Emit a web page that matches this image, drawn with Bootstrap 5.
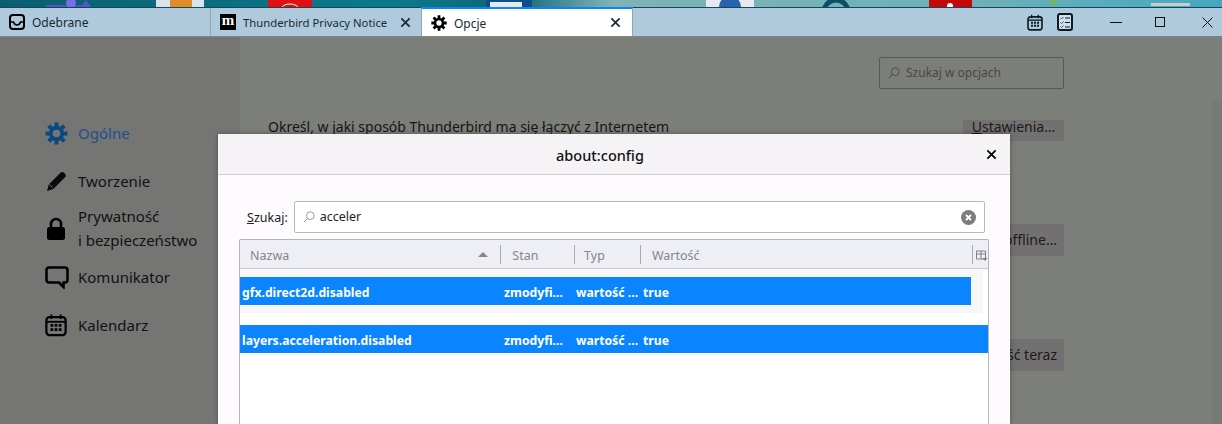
<!DOCTYPE html>
<html lang="pl">
<head>
<meta charset="utf-8">
<title>Opcje</title>
<link href="https://cdn.jsdelivr.net/npm/bootstrap@5.3.0/dist/css/bootstrap.min.css" rel="stylesheet">
<style>
html,body{height:424px;overflow:hidden;}
body{font-family:"Noto Sans","Open Sans",sans-serif;background:#7c7e7a;color:#151515;font-size:14px;position:relative;}
.desk{height:7px;display:block;width:1222px;}
.tabbar{height:29px;background:#aecadc;border-top:1px solid #0f4a5c;color:#1a2a33;font-size:12px;}
.tb-tab{height:28px;padding-left:9px;flex:0 0 auto;}
.t1{width:210px;}
.t2{width:211px;border-left:1px solid #8ea8b8;position:relative;}
.t3{width:212px;background:#fff;border-top:2px solid #0a84ff;border-left:1px solid #8ea8b8;border-right:1px solid #8ea8b8;height:29px;margin-top:-1px;position:relative;z-index:2;}
.tb-label{margin-left:7px;white-space:nowrap;padding-top:2px;}
.t2 .tb-label{width:147px;margin-left:7px;font-size:11.3px;}
.t2 .tb-x{margin-left:10px;}
.t3 .tb-x{margin-left:auto;margin-right:11px;}
.m-ico{width:16px;height:16px;background:#000;color:#fff;font-family:"Liberation Serif",serif;font-weight:700;font-size:15px;line-height:13px;text-align:center;}
.tb-right{margin-left:auto;height:28px;}
.tool-a{margin-right:14px;}
.tool-b{margin-right:37px;}
.win-a{margin-right:33px;}
.win-b{margin-right:37px;}
.win-c{margin-right:9px;}
.tabshade{height:1px;background:#7f8486;}
.shell{height:387px;}
.side{width:240px;flex:0 0 240px;background:#757674;padding:84px 0 0 45px;font-size:15px;}
.side-item{display:flex;align-items:center;color:#111;line-height:24px;}
.side-ico{width:33px;flex:0 0 33px;}
.i1{height:24px;color:#1d4f8c;}
.i1 svg{color:#0b4a7e;}
.i2{height:24px;margin-top:24px;}
.i3{height:48px;margin-top:11px;}
.i4{height:24px;margin-top:13px;}
.i5{height:24px;margin-top:24px;}
.pane{flex:1 1 auto;padding:20px 148px 0 28px;position:relative;}
.finder{width:185px;height:32px;margin-left:auto;border:1px solid #565856;border-radius:2px;color:#464846;font-size:12px;padding-left:8px;margin-bottom:31px;}
.finder span{margin-left:6px;}
.setrow{display:flex;justify-content:space-between;align-items:flex-start;font-size:14px;line-height:13px;}
.setbtn{background:#737072;color:#1a1a1a;padding:0 7px;height:21px;line-height:13px;width:101px;text-align:center;white-space:nowrap;}
.sb2{margin-top:83px;height:32px;line-height:32px;display:flex;justify-content:flex-end;}
.sb3{margin-top:83px;height:32px;line-height:32px;display:flex;justify-content:flex-end;}
.plainbtn{background:#737072;width:101px;text-align:right;padding-right:7px;color:#1a1a1a;}
.scrollcol{width:10px;flex:0 0 10px;margin-top:64px;background:#777976;}
.dlg{position:absolute;left:218px;top:134px;width:792px;height:290px;background:#fdfbfe;border-radius:3px 3px 0 0;box-shadow:0 0 5px rgba(0,0,0,.35);z-index:5;}
.dlg-head{height:41px;background:#f5f3f6;border-bottom:1px solid #d0cfd2;font-size:14.5px;font-weight:500;color:#111;position:relative;padding:3px 28px 0 0;}
.dlg-x{position:absolute;right:13px;top:15px;line-height:0;}
.dlg-body{padding:26px 21px 0;}
.srow{height:32px;margin-bottom:6px;padding-left:8px;font-size:12.5px;color:#222;}
.srow label{padding-top:3px;}
.sinput{margin-left:6px;margin-right:4px;flex:1 1 auto;height:32px;background:#fff;border:1px solid #b8b8bc;border-radius:2px;padding:0 8px;color:#222;}
.sinput .q{margin-left:5px;padding-top:1px;}
.sinput .c{margin-left:auto;margin-right:0;line-height:0;}
.tree{border:1px solid #b3b3b8;border-bottom:0;border-radius:2px 2px 0 0;height:185px;background:#fff;font-size:12.5px;}
.thead{height:29px;background:#edeff5;border-bottom:1px solid #c9c9ce;color:#85858c;}
.th{height:100%;display:flex;align-items:center;padding:5px 0 0 10px;position:relative;}
.th::after{content:"";position:absolute;right:0;top:5px;bottom:4px;width:1px;background:#a9a9af;}
.w1{width:262px;}.w2{width:74px;padding-left:11px;}.w3{width:66px;padding-left:9px;}.w4{width:333px;padding-left:11px;}
.w5{flex:1;padding-left:3px;padding-top:3px;}
.w5::after{display:none;}
.sortarrow{position:absolute;right:13px;top:12px;width:0;height:0;border:5px solid transparent;border-top:0;border-bottom:5px solid #888;}
.band{height:44px;background:#f7f6f8;padding-top:8px;margin-right:5px;}
.gap1{height:12px;background:#fff;margin-right:5px;}
.trow{height:28px;background:#0a84ff;color:#fff;font-weight:700;font-size:12.2px;display:flex;align-items:center;white-space:nowrap;padding-top:5px;}
.r1{width:731px;}
.c1{width:262px;padding-left:2px;}
.c2{width:72px;padding-left:2px;}
.c3{width:69px;padding-left:2px;}
</style>
</head>
<body>
<svg class="desk" viewBox="0 0 1222 7" preserveAspectRatio="none" aria-hidden="true">
<defs><linearGradient id="dg" x1="0" x2="1" y1="0" y2="0"><stop offset="0" stop-color="#0b5d70"/><stop offset=".32" stop-color="#0d7a8c"/><stop offset=".42" stop-color="#0e6578"/><stop offset=".5" stop-color="#7fb3b6"/><stop offset=".8" stop-color="#6fb0b8"/><stop offset="1" stop-color="#45a8c0"/></linearGradient></defs>
<rect width="1222" height="7" fill="url(#dg)"/>
<rect x="46" y="5" width="44" height="2" fill="#5a4fc0"/><circle cx="71" cy="3" r="5" fill="#7a6fe0"/><path d="M81 7l5-7 5 7z" fill="#5a50c8"/>
<rect x="156" width="48" height="7" fill="#d8e4ea"/><rect x="170" width="22" height="7" fill="#e08a2a"/>
<rect x="268" width="44" height="7" fill="#e01010"/><path d="M282 7c3-4 13-4 16 0" stroke="#fff" fill="none"/>
<rect x="486" width="46" height="7" fill="#0d4f86"/><rect x="490" y="2" width="32" height="5" fill="#e4e8f0"/>
<rect x="706" width="48" height="7" fill="#e8e8f0"/><circle cx="730" cy="7" r="11" fill="#2a62ae"/>
<circle cx="836" cy="12" r="12" fill="none" stroke="#0c4f66" stroke-width="5"/>
<rect x="929" width="43" height="7" fill="#c40808"/><circle cx="950" cy="6" r="3" fill="#fff"/>
<path d="M1050 0l3 5 4-5" stroke="#7ab648" stroke-width="2" fill="none"/>
<rect x="1151" y="3" width="39" height="3" fill="#ccc"/>
</svg>
<svg width="0" height="0" class="position-absolute" aria-hidden="true">
<symbol id="gear" viewBox="0 0 24 24"><circle cx="12" cy="12" r="6" fill="none" stroke="currentColor" stroke-width="4"/><g stroke="currentColor" stroke-width="4.200"><path d="M12 .5v5M12 18.500v5M.5 12h5M18.500 12h5M3.900 3.900l3.600 3.600M16.500 16.500l3.600 3.600M20.100 3.900l-3.600 3.600M7.500 16.500l-3.600 3.600"/></g></symbol>
<symbol id="cal" viewBox="0 0 24 24"><rect x="1.500" y="3.500" width="21" height="19.500" rx="3.500" fill="none" stroke="currentColor" stroke-width="2.400"/><path d="M2 8.500h20" stroke="currentColor" stroke-width="2"/><path d="M7 .5v5M17 .5v5" stroke="currentColor" stroke-width="2"/><path d="M6 11h3v3H6zM10.500 11h3v3h-3zM15 11h3v3h-3zM6 15.500h3v3H6zM10.500 15.500h3v3h-3zM15 15.500h3v3h-3z" fill="currentColor"/></symbol>
<symbol id="xs" viewBox="0 0 12 12"><path d="M1.500 1.500l9 9M10.500 1.500l-9 9" stroke="currentColor" stroke-width="1.900" fill="none"/></symbol>
<symbol id="mag" viewBox="0 0 14 14"><circle cx="8.500" cy="5.500" r="4.500" fill="none" stroke="currentColor"/><path d="M5.200 8.800L1 13" stroke="currentColor" stroke-width="1.100"/></symbol>
</svg>

<div class="tabbar d-flex align-items-center">
  <div class="tb-tab t1 d-flex align-items-center">
    <svg width="16" height="16" viewBox="0 0 16 16"><rect x="1" y="1" width="14" height="14" rx="3" fill="none" stroke="#000" stroke-width="2"/><path d="M1.500 8h3c.6 2 2 3 3.500 3s2.900-1 3.500-3h3" fill="none" stroke="#000" stroke-width="1.600"/></svg>
    <span class="tb-label">Odebrane</span>
  </div>
  <div class="tb-tab t2 d-flex align-items-center">
    <div class="m-ico">m</div>
    <span class="tb-label">Thunderbird Privacy Notice</span>
    <svg class="tb-x" width="11" height="11" style="color:#1a2a33"><use href="#xs"/></svg>
  </div>
  <div class="tb-tab t3 d-flex align-items-center">
    <svg width="16" height="16" style="color:#000"><use href="#gear"/></svg>
    <span class="tb-label">Opcje</span>
    <svg class="tb-x" width="11" height="11" style="color:#1a2a33"><use href="#xs"/></svg>
  </div>
  <div class="tb-right d-flex align-items-center">
    <svg class="tool-a" width="16" height="17" style="color:#0c1a24"><use href="#cal"/></svg>
    <svg class="tool-b" width="16" height="18" viewBox="0 0 16 18"><rect x="1" y="1" width="14" height="16" rx="2" fill="#cfe0ea" stroke="#0c1a24" stroke-width="2"/><path d="M3.500 5l1 1 2-2M3.500 9.500l1 1 2-2M3.500 13.500l1 1 2-2" stroke="#333" fill="none" stroke-width=".8"/><path d="M8 5h5M8 9.500h5M8 14h5" stroke="#0c1a24"/></svg>
    <svg class="win-a" width="12" height="1"><rect width="12" height="1" fill="#111"/></svg>
    <svg class="win-b" width="10" height="10"><rect x=".5" y=".5" width="9" height="9" fill="none" stroke="#111"/></svg>
    <svg class="win-c" width="11" height="11"><path d="M.5.5l10 10M10.500.5l-10 10" stroke="#111" fill="none"/></svg>
  </div>
</div>
<div class="tabshade"></div>

<div class="shell d-flex">
  <nav class="side">
    <div class="side-item i1"><span class="side-ico"><svg width="23" height="23" class="d-block"><use href="#gear"/></svg></span>Ogólne</div>
    <div class="side-item i2"><span class="side-ico"><svg width="22" height="22" viewBox="0 0 22 22" class="d-block"><path d="M2 21l1.800-6.500L15.500 2.800c1-1 2.500-1 3.500 0l1 1c1 1 1 2.500 0 3.500L8.300 19z" fill="#0a0a0a"/><path d="M4.500 14.500l3 3" stroke="#757674"/></svg></span>Tworzenie</div>
    <div class="side-item i3"><span class="side-ico"><svg width="22" height="23" viewBox="0 0 22 23" class="d-block"><path d="M6 10V7a5 5 0 0 1 10 0v3" fill="none" stroke="#000" stroke-width="2.600"/><rect x="2" y="10" width="18" height="13" rx="2.500" fill="#000"/></svg></span><span>Prywatność<br>i bezpieczeństwo</span></div>
    <div class="side-item i4"><span class="side-ico"><svg width="24" height="23" viewBox="0 0 24 23" class="d-block"><path d="M4 1.500h16A2.500 2.500 0 0 1 22.500 4v10a2.500 2.500 0 0 1-2.500 2.500h-1.500V21l-4.500-4.500H4A2.500 2.500 0 0 1 1.500 14V4A2.500 2.500 0 0 1 4 1.500z" fill="none" stroke="#000" stroke-width="2.600"/></svg></span>Komunikator</div>
    <div class="side-item i5"><span class="side-ico"><svg width="22" height="24" class="d-block" style="color:#000"><use href="#cal"/></svg></span>Kalendarz</div>
  </nav>
  <main class="pane">
    <div class="finder d-flex align-items-center"><svg width="12" height="12" style="color:#464846"><use href="#mag"/></svg><span>Szukaj w opcjach</span></div>
    <div class="setrow"><span>Określ, w jaki sposób Thunderbird ma się łączyć z Internetem</span><span class="setbtn"><u>U</u>stawienia…</span></div>
    <div class="sb2"><span class="plainbtn">Tryb offline…</span></div>
    <div class="sb3"><span class="plainbtn">Wyczyść teraz</span></div>
  </main>
  <div class="scrollcol"></div>
</div>

<section class="dlg">
  <div class="dlg-head d-flex align-items-center justify-content-center">about:config
    <span class="dlg-x"><svg width="11" height="11" style="color:#000"><use href="#xs"/></svg></span>
  </div>
  <div class="dlg-body">
    <div class="srow d-flex align-items-center">
      <label class="flex-shrink-0"><u>S</u>zukaj:</label>
      <div class="sinput d-flex align-items-center">
        <svg width="12" height="12" style="color:#8a8a8a"><use href="#mag"/></svg>
        <span class="q">acceler</span>
        <span class="c"><svg width="15" height="15" viewBox="0 0 15 15"><circle cx="7.500" cy="7.500" r="7.500" fill="#7d7d80"/><path d="M5 5l5 5M10 5l-5 5" stroke="#fff" stroke-width="1.800"/></svg></span>
      </div>
    </div>
    <div class="tree">
      <div class="thead d-flex">
        <div class="th w1">Nazwa<span class="sortarrow"></span></div>
        <div class="th w2">Stan</div>
        <div class="th w3">Typ</div>
        <div class="th w4">Wartość</div>
        <div class="th w5"><svg width="12" height="12" viewBox="0 0 12 12"><path d="M.5 1h9v8h-9zM.5 4h9M5 1v8" fill="none" stroke="#808088"/><path d="M6.500 8h5l-2.500 3z" fill="#808088"/></svg></div>
      </div>
      <div class="band">
        <div class="trow r1"><span class="c1">gfx.direct2d.disabled</span><span class="c2">zmodyfi…</span><span class="c3">wartość …</span><span>true</span></div>
      </div>
      <div class="gap1"></div>
      <div class="trow"><span class="c1">layers.acceleration.disabled</span><span class="c2">zmodyfi…</span><span class="c3">wartość …</span><span>true</span></div>
    </div>
  </div>
</section>
<script src="https://cdn.jsdelivr.net/npm/bootstrap@5.3.0/dist/js/bootstrap.bundle.min.js"></script>
</body>
</html>
